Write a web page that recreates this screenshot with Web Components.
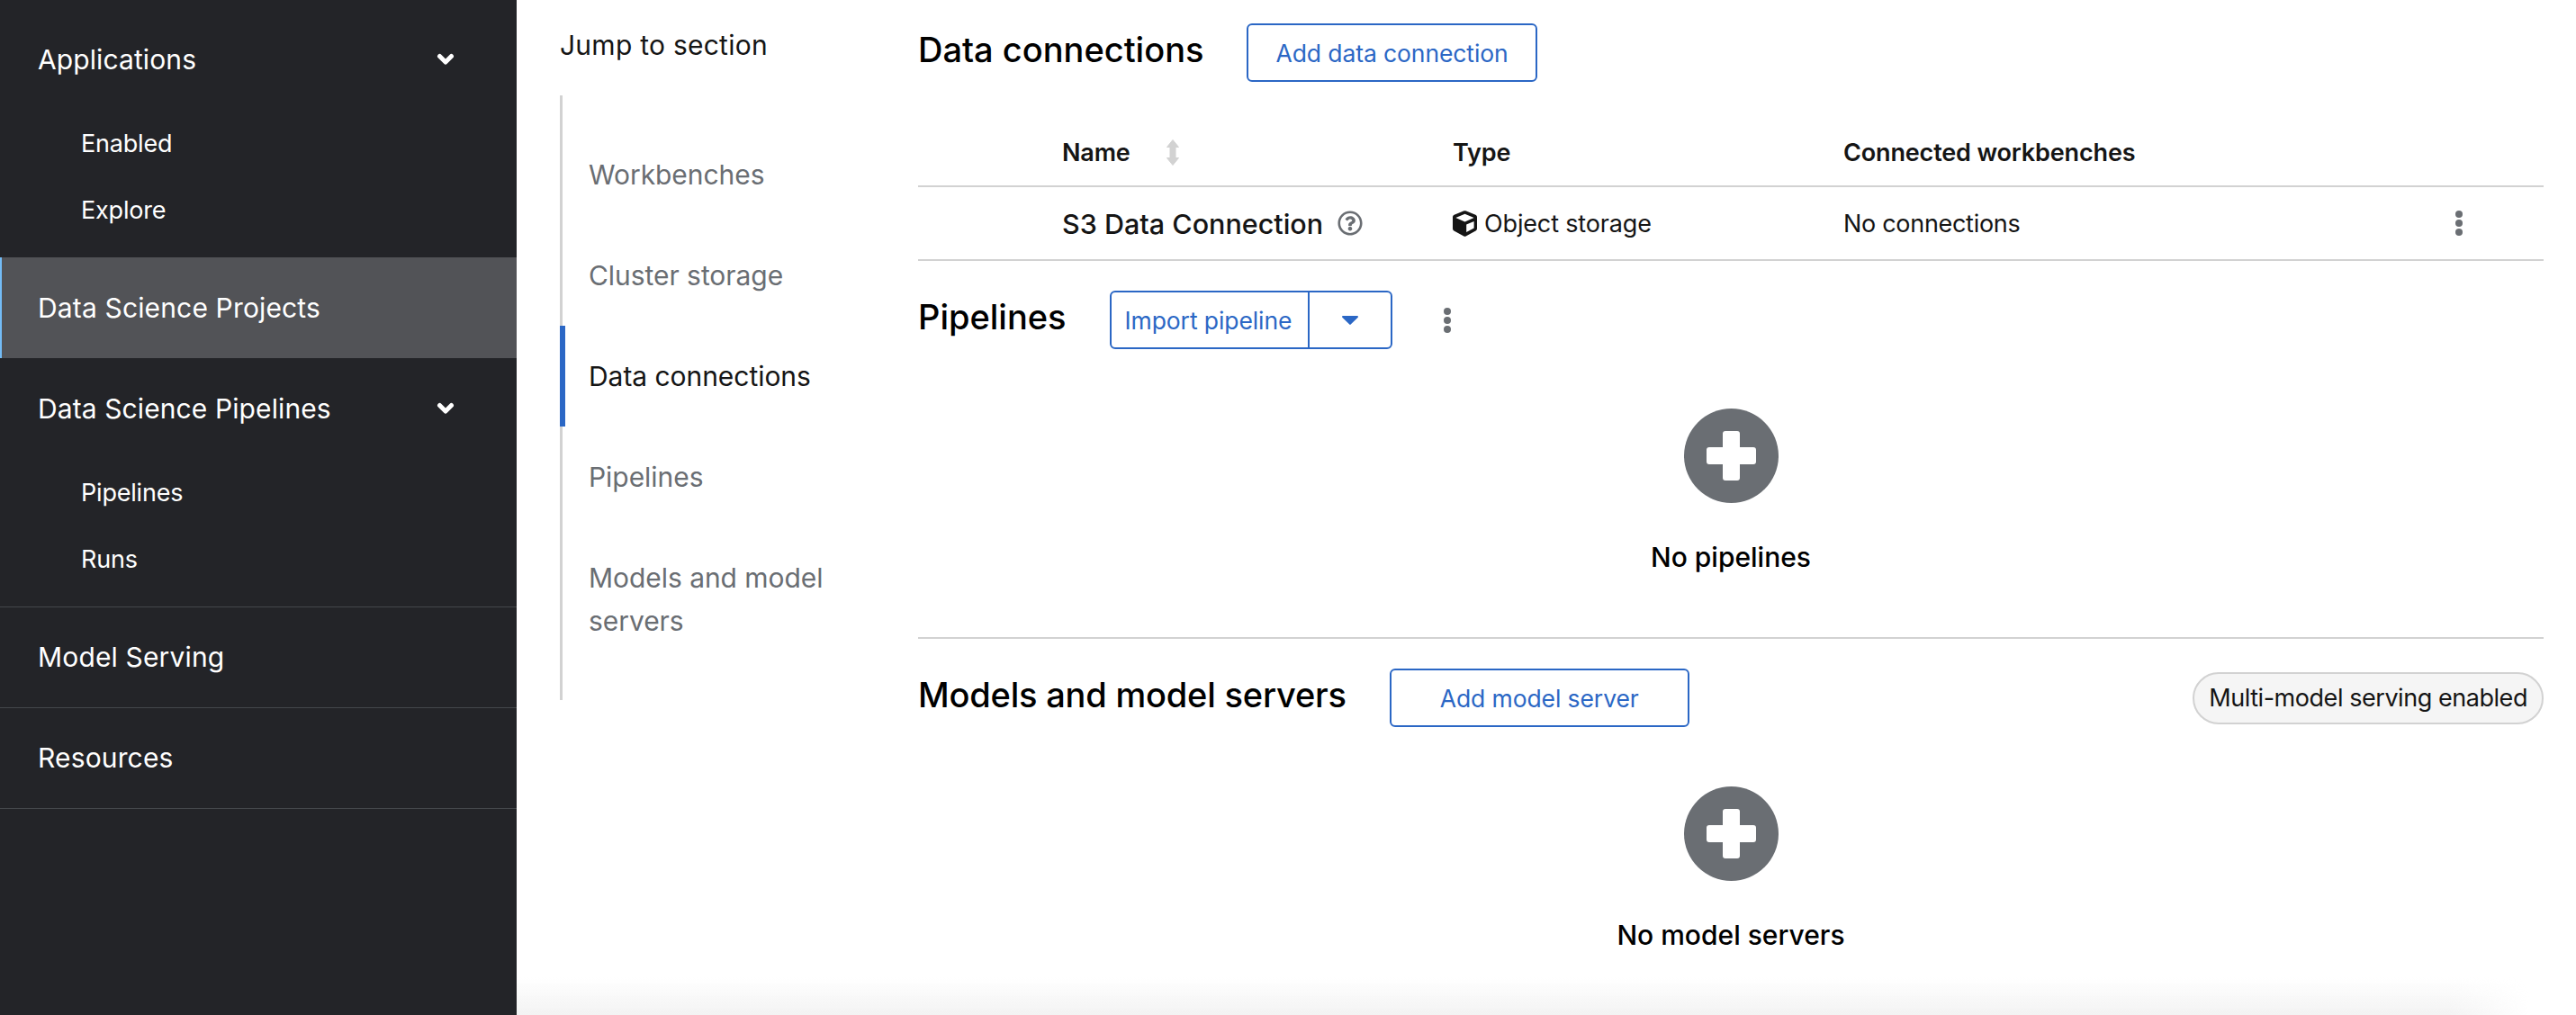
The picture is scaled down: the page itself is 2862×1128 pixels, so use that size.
<!DOCTYPE html>
<html>
<head>
<meta charset="utf-8">
<title>Data Science Projects</title>
<style>
  html, body { margin: 0; height: 100%; background: #fff; }
  body { font-family: Inter, "Noto Sans", sans-serif; color: #151515; overflow: hidden; }
  app-shell { height: 1128px; }
</style>
</head>
<body>
<app-shell>
  <side-nav slot="nav">
    <nav-group label="Applications" expanded>
      <nav-sub>Enabled</nav-sub>
      <nav-sub>Explore</nav-sub>
    </nav-group>
    <nav-link current>Data Science Projects</nav-link>
    <nav-group label="Data Science Pipelines" expanded>
      <nav-sub>Pipelines</nav-sub>
      <nav-sub>Runs</nav-sub>
    </nav-group>
    <nav-link>Model Serving</nav-link>
    <nav-link last>Resources</nav-link>
  </side-nav>

  <jump-nav slot="jump" label="Jump to section">
    <jump-link>Workbenches</jump-link>
    <jump-link>Cluster storage</jump-link>
    <jump-link active>Data connections</jump-link>
    <jump-link>Pipelines</jump-link>
    <jump-link>Models and model servers</jump-link>
  </jump-nav>

  <section-head heading="Data connections" style="--head-top:26px; --head-gap:48px">
    <pf-button>Add data connection</pf-button>
  </section-head>
  <connections-table></connections-table>

  <section-head heading="Pipelines" style="--head-top:33px; --head-gap:48px">
    <split-button>Import pipeline</split-button>
    <kebab-icon style="margin-left:57px"></kebab-icon>
  </section-head>
  <empty-state style="--empty-bottom:70px">No pipelines</empty-state>

  <section-head heading="Models and model servers" divided style="--head-top:33px; --head-gap:48px; --head-spacing:-.2px">
    <pf-button wide>Add model server</pf-button>
    <status-pill slot="end">Multi-model serving enabled</status-pill>
  </section-head>
  <empty-state>No model servers</empty-state>
</app-shell>

<script>
// --- helper: every element gets its shadow root from a template string ---
function define(name, html, extra) {
  const tpl = document.createElement('template');
  tpl.innerHTML = html;
  class El extends HTMLElement {
    constructor() {
      super();
      this.attachShadow({ mode: 'open' }).appendChild(tpl.content.cloneNode(true));
    }
    connectedCallback() {
      if (extra) extra(this);
    }
  }
  customElements.define(name, El);
}

const KEBAB = `<svg viewBox="0 0 8 28" width="8" height="28" fill="#6a6e73"><circle cx="4" cy="4" r="4"/><circle cx="4" cy="14" r="4"/><circle cx="4" cy="24" r="4"/></svg>`;

// --- Shell ---

define('app-shell', `
  <style>
    :host { display: flex; align-items: stretch; position: relative; overflow: hidden; }
    main { flex: 1; min-width: 0; padding-right: 36px; display: flex; flex-direction: column; }
    .fade { position: absolute; left: 574px; right: 0; bottom: 0; height: 42px; pointer-events: none;
      background: linear-gradient(to bottom, rgba(243,243,243,0), #f3f3f3);
      -webkit-mask-image: linear-gradient(to right, #000 calc(100% - 142px), transparent calc(100% - 52px));
      mask-image: linear-gradient(to right, #000 calc(100% - 142px), transparent calc(100% - 52px)); }
  </style>
  <slot name="nav"></slot>
  <slot name="jump"></slot>
  <main><slot></slot></main>
  <div class="fade"></div>
`);

// --- Sidebar ---

define('side-nav', `
  <style>
    :host { display: flex; flex-direction: column; flex: 0 0 574px; width: 574px; background: #232428; color: #fff; padding-top: 10px; box-sizing: border-box; }
  </style>
  <slot></slot>
`);

define('nav-group', `
  <style>
    :host { display: block; }
    .head { display: flex; align-items: center; justify-content: space-between; height: 112px; padding: 0 69px 0 42px; font-size: 30px; letter-spacing: .1px; }
    svg { display: block; }
    .subs { display: flex; flex-direction: column; padding-bottom: 16px; }
  </style>
  <div class="head"><span class="label"></span>
    <svg width="20" height="14" viewBox="0 0 20 14"><path d="M3.5 3.5L10 10l6.500-6.500" fill="none" stroke="#fff" stroke-width="5" stroke-linecap="round" stroke-linejoin="round"/></svg>
  </div>
  <div class="subs"><slot></slot></div>
`, el => { el.shadowRoot.querySelector('.label').textContent = el.getAttribute('label'); });

define('nav-sub', `
  <style>
    :host { display: flex; align-items: center; height: 74px; padding-left: 90px; font-size: 27px; letter-spacing: -.2px; }
  </style>
  <slot></slot>
`);

define('nav-link', `
  <style>
    :host { display: flex; align-items: center; box-sizing: border-box; height: 112px; padding: 0 0 2px 42px; font-size: 30px; letter-spacing: .15px; border-top: 1px solid #44474b; }
    :host([current]) { background: #525357; border-top: 0; padding-bottom: 0; box-shadow: inset 2px 0 0 #73bcf7; }
    :host([last]) { height: 113px; border-bottom: 1px solid #44474b; }
  </style>
  <slot></slot>
`);

// --- Jump links ---

define('jump-nav', `
  <style>
    :host { display: block; flex: 0 0 398px; width: 398px; margin-left: 48px; box-sizing: border-box; }
    .label { height: 106px; padding-top: 31px; box-sizing: border-box; font-size: 30px; line-height: 38px; letter-spacing: .25px; }
    .list { display: flex; flex-direction: column; width: 300px; border-left: 3px solid #d2d2d2; padding-top: 32px; padding-bottom: 32px; }
  </style>
  <div class="label"></div>
  <div class="list"><slot></slot></div>
`, el => { el.shadowRoot.querySelector('.label').textContent = el.getAttribute('label'); });

define('jump-link', `
  <style>
    :host { display: block; font-size: 30px; line-height: 48px; color: #6a6e73; padding: 32px 0 32px 32px; letter-spacing: -.05px; margin-left: -3px; }
    :host([active]) { color: #151515; box-shadow: inset 6px 0 0 #2b67c5; }
  </style>
  <slot></slot>
`);

// --- Section pieces ---

define('section-head', `
  <style>
    :host { display: block; }
    :host([divided]) { border-top: 2px solid #d2d2d2; }
    .row { display: flex; align-items: center; padding-top: var(--head-top, 0); }
    h2 { margin: 0 0 7px; font-size: 38px; font-weight: 500; line-height: 50px; letter-spacing: var(--head-spacing, 0); color: #000; white-space: nowrap; }
    .tools { display: flex; align-items: center; margin-left: var(--head-gap, 48px); }
    .end { margin-left: auto; }
  </style>
  <div class="row">
    <h2></h2>
    <div class="tools"><slot></slot></div>
    <div class="end"><slot name="end"></slot></div>
  </div>
`, el => { el.shadowRoot.querySelector('h2').textContent = el.getAttribute('heading'); });

define('pf-button', `
  <style>
    :host { display: inline-flex; align-items: center; justify-content: center; box-sizing: border-box; height: 65px; padding: 0 30px; border: 2px solid #2b67c5; border-radius: 6px; color: #2b67c5; font-size: 26.5px; letter-spacing: -.1px; white-space: nowrap; }
    :host([wide]) { padding: 0 54px; }
  </style>
  <slot></slot>
`);

define('split-button', `
  <style>
    :host { display: inline-flex; box-sizing: border-box; height: 65px; border: 2px solid #2b67c5; border-radius: 6px; color: #2b67c5; font-size: 26.5px; letter-spacing: -.1px; white-space: nowrap; }
    .main { display: flex; align-items: center; padding: 0 15px; border-right: 2px solid #2b67c5; width: 188px; }
    .caret { display: flex; align-items: center; justify-content: center; width: 90px; }
  </style>
  <div class="main"><slot></slot></div>
  <div class="caret"><svg width="18" height="10" viewBox="0 0 18 10"><path d="M1 0h16a1 1 0 0 1 .7 1.7L9.7 9.6a1 1 0 0 1-1.4 0L.3 1.7A1 1 0 0 1 1 0z" fill="#2b67c5"/></svg></div>
`);

define('kebab-icon', `
  <style>:host { display: inline-flex; } svg { display: block; }</style>
  ${KEBAB}
`);

define('status-pill', `
  <style>
    :host { display: inline-flex; align-items: center; box-sizing: border-box; height: 58px; padding: 0 16px; border: 2px solid #d2d2d2; border-radius: 30px; background: #f5f5f5; font-size: 27px; letter-spacing: -.45px; white-space: nowrap; }
  </style>
  <slot></slot>
`);

define('connections-table', `
  <style>
    :host { display: block; font-size: 27px; letter-spacing: -.15px; }
    .row { display: grid; grid-template-columns: 160px 434px 1fr 94px; align-items: center; border-bottom: 2px solid #d2d2d2; box-sizing: content-box; }
    .head { height: 73px; padding-top: 42px; font-weight: 600; }
    .body { height: 80px; }
    .cell { display: flex; align-items: center; }
    .cols { display: grid; grid-template-columns: 434px 432px; }
    .name { font-size: 30.5px; font-weight: 500; letter-spacing: 0; gap: 16px; }
    svg { display: block; flex: none; }
    .sort { margin-left: 40px; }
    .type { gap: 8px; }
    .menu { justify-content: flex-start; margin-left: -4px; }
    .empty { letter-spacing: -.3px; }
  </style>
  <div class="row head">
    <span></span>
    <div class="cell">Name
      <svg class="sort" width="14" height="29" viewBox="0 0 14 29"><path d="M7 .5L13.500 8.500H10V20.500h3.500L7 28.500.5 20.500H4V8.500H.5z" fill="#d2d2d2" stroke="#d2d2d2" stroke-linejoin="round"/></svg>
    </div>
    <div class="cols"><div class="cell">Type</div><div class="cell">Connected workbenches</div></div>
    <span></span>
  </div>
  <div class="row body">
    <span></span>
    <div class="cell name">S3 Data Connection
      <svg width="28" height="28" viewBox="0 0 512 512"><path fill="#6a6e73" d="M256 8C119 8 8 119.100 8 256c0 137 111 248 248 248s248-111 248-248C504 119.100 393 8 256 8zm0 448c-110.500 0-200-89.500-200-200 0-110.500 89.500-200 200-200 110.500 0 200 89.500 200 200 0 110.600-89.500 200-200 200zm107.200-255.200c0 67.100-72.400 68.100-72.400 92.900V300c0 6.600-5.400 12-12 12h-45.600c-6.600 0-12-5.400-12-12v-8.700c0-35.700 27.100-50 47.600-61.500 17.600-9.900 28.300-16.600 28.300-29.600 0-17.200-22-28.700-39.800-28.700-23.200 0-33.900 11-49 30-4.100 5.100-11.500 6.100-16.700 2.100l-27.800-21.100c-5.100-3.900-6.300-11.100-2.600-16.400C184.800 131.500 214.900 112 261.800 112c49.100 0 101.400 38.300 101.400 88.800zM298 368c0 23.200-18.800 42-42 42s-42-18.800-42-42 18.800-42 42-42 42 18.800 42 42z"/></svg>
    </div>
    <div class="cols">
      <div class="cell type">
        <svg width="27" height="29" viewBox="0 0 512 512" preserveAspectRatio="none"><path fill="#151515" d="M239.100 6.300l-208 78c-18.700 7-31.100 25-31.100 45v225.100c0 18.200 10.300 34.800 26.500 42.900l208 104c13.500 6.800 29.400 6.800 42.900 0l208-104c16.300-8.100 26.500-24.800 26.500-42.900V129.300c0-20-12.400-37.900-31.100-44.900l-208-78C262 2.200 250 2.200 239.100 6.300zM256 68.400l192 72v1.100l-192 78-192-78v-1.100l192-72zm32 356V275.500l160-65v133.900l-160 80z"/></svg>
        Object storage
      </div>
      <div class="cell empty">No connections</div>
    </div>
    <div class="cell menu">${KEBAB}</div>
  </div>
`);

define('empty-state', `
  <style>
    :host { display: flex; flex-direction: column; align-items: center; padding-top: 66px; padding-bottom: var(--empty-bottom, 0); }
    svg { display: block; }
    .title { margin-top: 41px; font-size: 30px; line-height: 38px; font-weight: 500; letter-spacing: 0; color: #000; }
  </style>
  <svg width="105" height="105" viewBox="0 0 105 105">
    <circle cx="52.5" cy="52.5" r="52.5" fill="#6a6e73"/>
    <path d="M46 25h13a3 3 0 0 1 3 3v15h15a3 3 0 0 1 3 3v13a3 3 0 0 1-3 3H62v15a3 3 0 0 1-3 3H46a3 3 0 0 1-3-3V62H28a3 3 0 0 1-3-3V46a3 3 0 0 1 3-3h15V28a3 3 0 0 1 3-3z" fill="#fff"/>
  </svg>
  <div class="title"><slot></slot></div>
`);
</script>
</body>
</html>
